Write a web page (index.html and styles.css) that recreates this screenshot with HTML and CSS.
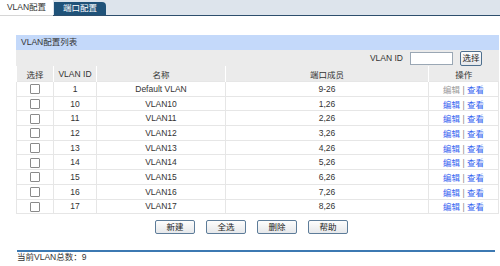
FILE: index.html
```html
<!DOCTYPE html>
<html lang="zh">
<head>
    <meta charset="UTF-8">
    <title>VLAN配置</title>
    <link rel="stylesheet" href="styles.css">
</head>
<body>
    <!-- 顶部标签 -->
    <div class="tabs">
        <div class="tab active">VLAN配置</div>
        <div class="tab other">端口配置</div>
    </div>

    <div class="panel">
        <div class="panel-title">VLAN配置列表</div>
        <div class="search-row">
            <span class="label">VLAN ID</span>
            <input type="text" class="vid-input">
            <button class="btn small">选择</button>
        </div>
        <table class="vlan-table">
            <thead>
                <tr>
                    <th class="c-sel">选择</th>
                    <th class="c-id">VLAN ID</th>
                    <th class="c-name">名称</th>
                    <th class="c-port">端口成员</th>
                    <th class="c-op">操作</th>
                </tr>
            </thead>
            <tbody>
                <tr><td><span class="chk"></span></td><td>1</td><td>Default VLAN</td><td>9-26</td><td><span class="off">编辑</span> <span class="sep">|</span> <a href="#">查看</a></td></tr>
                <tr><td><span class="chk"></span></td><td>10</td><td>VLAN10</td><td>1,26</td><td><a href="#">编辑</a> <span class="sep">|</span> <a href="#">查看</a></td></tr>
                <tr><td><span class="chk"></span></td><td>11</td><td>VLAN11</td><td>2,26</td><td><a href="#">编辑</a> <span class="sep">|</span> <a href="#">查看</a></td></tr>
                <tr><td><span class="chk"></span></td><td>12</td><td>VLAN12</td><td>3,26</td><td><a href="#">编辑</a> <span class="sep">|</span> <a href="#">查看</a></td></tr>
                <tr><td><span class="chk"></span></td><td>13</td><td>VLAN13</td><td>4,26</td><td><a href="#">编辑</a> <span class="sep">|</span> <a href="#">查看</a></td></tr>
                <tr><td><span class="chk"></span></td><td>14</td><td>VLAN14</td><td>5,26</td><td><a href="#">编辑</a> <span class="sep">|</span> <a href="#">查看</a></td></tr>
                <tr><td><span class="chk"></span></td><td>15</td><td>VLAN15</td><td>6,26</td><td><a href="#">编辑</a> <span class="sep">|</span> <a href="#">查看</a></td></tr>
                <tr><td><span class="chk"></span></td><td>16</td><td>VLAN16</td><td>7,26</td><td><a href="#">编辑</a> <span class="sep">|</span> <a href="#">查看</a></td></tr>
                <tr><td><span class="chk"></span></td><td>17</td><td>VLAN17</td><td>8,26</td><td><a href="#">编辑</a> <span class="sep">|</span> <a href="#">查看</a></td></tr>
            </tbody>
        </table>
        <div class="actions">
            <button class="btn">新建</button>
            <button class="btn">全选</button>
            <button class="btn">删除</button>
            <button class="btn">帮助</button>
        </div>
    </div>

    <div class="footer">
        <div class="footer-text">当前VLAN总数：9</div>
    </div>
</body>
</html>
```

FILE: styles.css
```css
/* VLAN配置页面样式 */

body {
    margin: 0;
    font-family: "Liberation Sans", "Noto Sans CJK SC", sans-serif;
    font-size: 8.5px;
    color: #333;
    background: #fff;
}

.tabs {
    display: flex;
    align-items: flex-end;
    height: 15px;
    background: #dde4ec;
    border-bottom: 1px solid #2d4e6d;
}

.tab {
    height: 13px;
    line-height: 13px;
    text-align: center;
}

.tab.active {
    width: 53px;
    height: 16px;
    line-height: 15px;
    margin-bottom: -1px;
    background: #fff;
    border-bottom: 1px solid #d6d6d6;
    box-sizing: border-box;
}

.tab.other {
    width: 52px;
    margin-left: 1px;
    background: #1f5279;
    color: #fff;
    border-top-right-radius: 4px;
}

.panel {
    margin: 19px 1px 0 16px;
}

.panel-title {
    height: 15px;
    line-height: 15px;
    padding-left: 5px;
    background: #c4d9fa;
}

.search-row {
    display: flex;
    justify-content: flex-end;
    align-items: center;
    height: 16px;
    background: #ebebeb;
    padding-right: 17px;
}

.label {
    margin-right: 7px;
}

.vid-input {
    width: 43px;
    height: 13px;
    padding: 0;
    border: 1px solid #9aa7b4;
    box-sizing: border-box;
    margin-right: 7px;
}

.btn {
    font-family: "Liberation Sans", "Noto Sans CJK SC", sans-serif;
    font-size: 8.5px;
    color: #222;
    width: 40px;
    height: 14px;
    padding: 0;
    line-height: 12px;
    border: 1px solid #5d7c99;
    border-radius: 2px;
    background: linear-gradient(#fdfdfd, #e6e8eb);
    cursor: pointer;
}

.btn.small {
    width: 22px;
    height: 15px;
    border-color: #4e6f8e;
}

.vlan-table {
    width: 100%;
    border-collapse: collapse;
    table-layout: fixed;
}

.vlan-table th {
    font-weight: normal;
    height: 15px;
    padding: 0;
    background: #ebebeb;
    border-left: 1px solid #fff;
}

.vlan-table td {
    height: 13.7px;
    padding: 0;
    text-align: center;
    border: 1px solid #e6e6e6;
}

.c-sel { width: 36px; }
.c-id { width: 42px; }
.c-name { width: 128px; }
.c-port { width: 202px; }

.chk {
    display: inline-block;
    width: 8px;
    height: 8px;
    border: 1px solid #8a8a8a;
    border-radius: 1px;
    background: #fff;
    vertical-align: middle;
}

.vlan-table a {
    color: #3563f0;
    text-decoration: none;
}

.off {
    color: #9a9a9a;
}

.sep {
    color: #888;
}

.actions {
    display: flex;
    justify-content: center;
    gap: 11px;
    margin-top: 6px;
    padding-right: 12px;
}

.footer {
    margin: 16px 5px 0 17px;
    border-top: 2px solid #3c79b2;
}

.footer-text {
    height: 11px;
    line-height: 11px;
}
```
